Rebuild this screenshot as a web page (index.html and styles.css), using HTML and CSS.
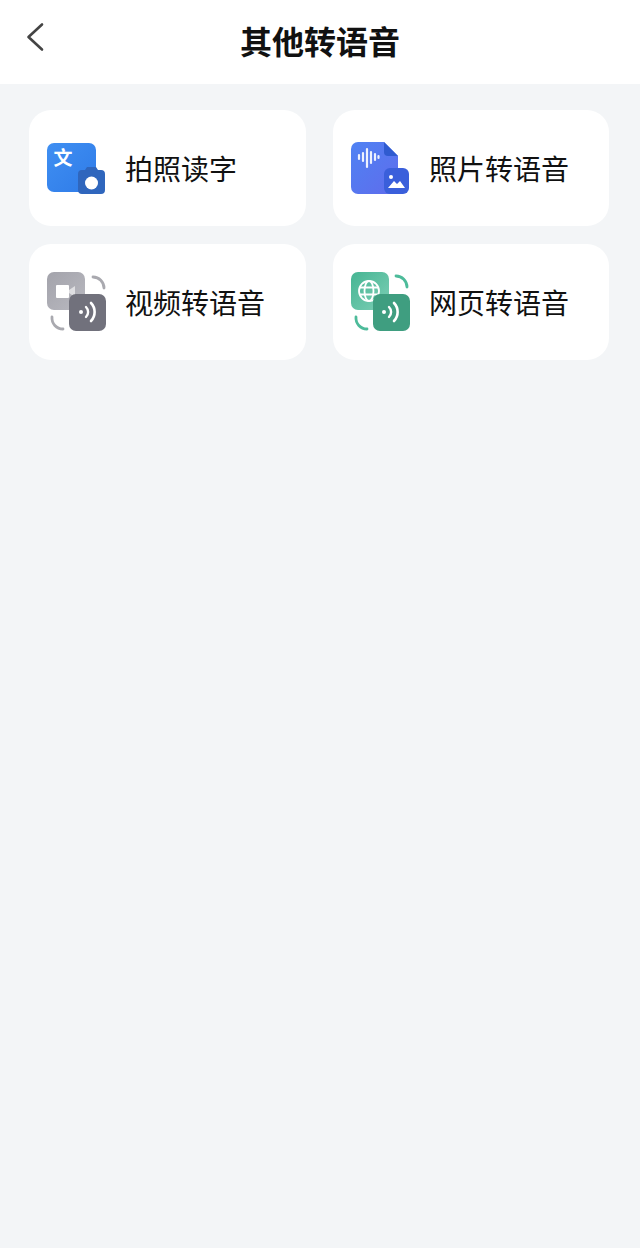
FILE: index.html
```html
<!DOCTYPE html>
<html lang="zh-CN">
<head>
    <meta charset="UTF-8">
    <meta name="viewport" content="width=device-width, initial-scale=1.0">
    <title>其他转语音</title>
    <link rel="stylesheet" href="styles.css">
</head>
<body>
    <header class="top-bar">
        <a class="back" href="#" aria-label="返回">
            <svg width="20" height="32" viewBox="0 0 20 32" fill="none">
                <path d="M16 2.5 2.5 15 16 27.500" stroke="#444" stroke-width="2.6" stroke-linecap="round" stroke-linejoin="round"/>
            </svg>
        </a>
        <h1 class="page-title">其他转语音</h1>
    </header>

    <main class="tool-grid">
        <div class="tool-card">
            <svg class="tool-icon" width="60" height="60" viewBox="0 0 60 60">
                <defs>
                    <linearGradient id="blueTile" x1="0" y1="0" x2="1" y2="1">
                        <stop offset="0" stop-color="#3f8ff2"/>
                        <stop offset="1" stop-color="#2f7be8"/>
                    </linearGradient>
                </defs>
                <rect x="1" y="5" width="49" height="49" rx="7" fill="url(#blueTile)"/>
                <text class="icon-glyph" x="17" y="27" text-anchor="middle">文</text>
                <path d="M36 32h3l2-3h9l2 3h3a4 4 0 0 1 4 4v16a4 4 0 0 1-4 4H36a4 4 0 0 1-4-4V36a4 4 0 0 1 4-4z" fill="#2f66bd"/>
                <circle cx="45.500" cy="45" r="6.500" fill="#fff"/>
            </svg>
            <span class="tool-name">拍照读字</span>
        </div>

        <div class="tool-card">
            <svg class="tool-icon" width="60" height="60" viewBox="0 0 60 60">
                <defs>
                    <linearGradient id="docTile" x1="0" y1="0" x2="1" y2="1">
                        <stop offset="0" stop-color="#4f82f3"/>
                        <stop offset="1" stop-color="#5f6cec"/>
                    </linearGradient>
                </defs>
                <path d="M8 4h26l14 14v31a7 7 0 0 1-7 7H8a7 7 0 0 1-7-7V11a7 7 0 0 1 7-7z" fill="url(#docTile)"/>
                <path d="M34 4l14 14H38a4 4 0 0 1-4-4z" fill="#2f5bd0"/>
                <g stroke="#fff" stroke-linecap="round" stroke-opacity=".9">
                    <path d="M9 17v4" stroke-width="2.200"/>
                    <path d="M13 15v8" stroke-width="2.200"/>
                    <path d="M17 11v18" stroke-width="2.200"/>
                    <path d="M21 14v11" stroke-width="2.200"/>
                    <path d="M25 16v6" stroke-width="2.200"/>
                    <path d="M28.500 18v2" stroke-width="2.200"/>
                </g>
                <rect x="34" y="30" width="25" height="26" rx="6" fill="#3a5fdb"/>
                <circle cx="41" cy="39" r="2" fill="#fff"/>
                <path d="M38 50l6-7 3 3 3-3 5 7z" fill="#fff"/>
            </svg>
            <span class="tool-name">照片转语音</span>
        </div>

        <div class="tool-card">
            <svg class="tool-icon" width="60" height="60" viewBox="0 0 60 60">
                <defs>
                    <linearGradient id="greyTile" x1="0" y1="0" x2="1" y2="1">
                        <stop offset="0" stop-color="#a3a3ab"/>
                        <stop offset="1" stop-color="#b9b9c0"/>
                    </linearGradient>
                </defs>
                <rect x="1" y="0" width="38" height="38" rx="7" fill="url(#greyTile)"/>
                <rect x="10" y="13" width="13" height="13" rx="1" fill="#fff"/>
                <path d="M23 18l6-4v11l-6-4z" fill="#fff" fill-opacity=".6"/>
                <g fill="none" stroke="#a9a9af" stroke-width="2.800" stroke-linecap="round">
                    <path d="M47 5a11 11 0 0 1 11 11"/>
                    <path d="M17 57a11 11 0 0 1-11-12"/>
                </g>
                <rect x="23" y="22" width="37" height="37" rx="7" fill="#71717c"/>
                <circle cx="35" cy="40" r="2" fill="#fff"/>
                <g fill="none" stroke="#fff" stroke-linecap="round">
                    <path d="M40 35a7 7 0 0 1 0 10" stroke-width="2.400"/>
                    <path d="M45 31a13 13 0 0 1 0 18" stroke-width="2.600"/>
                </g>
            </svg>
            <span class="tool-name">视频转语音</span>
        </div>

        <div class="tool-card">
            <svg class="tool-icon" width="60" height="60" viewBox="0 0 60 60">
                <defs>
                    <linearGradient id="greenTile" x1="0" y1="0" x2="1" y2="1">
                        <stop offset="0" stop-color="#45b593"/>
                        <stop offset="1" stop-color="#7fcfb6"/>
                    </linearGradient>
                </defs>
                <rect x="1" y="0" width="38" height="38" rx="7" fill="url(#greenTile)"/>
                <g fill="none" stroke="#fff" stroke-width="1.800">
                    <circle cx="19" cy="19" r="10"/>
                    <ellipse cx="19" cy="19" rx="4.500" ry="10"/>
                    <path d="M10 15.500h18M10 22.500h18"/>
                </g>
                <g fill="none" stroke="#4dbb9a" stroke-width="2.800" stroke-linecap="round">
                    <path d="M46 4a11 11 0 0 1 11 11"/>
                    <path d="M17 57a11 11 0 0 1-11-12"/>
                </g>
                <rect x="23" y="22" width="37" height="37" rx="7" fill="#3f9e80"/>
                <circle cx="34" cy="40" r="2" fill="#fff"/>
                <g fill="none" stroke="#fff" stroke-linecap="round">
                    <path d="M39 35a7 7 0 0 1 0 10" stroke-width="2.400"/>
                    <path d="M44 31a13 13 0 0 1 0 18" stroke-width="2.600"/>
                </g>
            </svg>
            <span class="tool-name">网页转语音</span>
        </div>
    </main>
</body>
</html>
```

FILE: styles.css
```css
body {
    margin: 0;
    min-height: 1248px;
    background-color: #f3f5f7;
    color: #111;
    font-family: "Noto Sans CJK SC", "Noto Sans", sans-serif;
}

.top-bar {
    display: grid;
    grid-template-columns: 1fr auto 1fr;
    align-items: center;
    height: 84px;
    padding-left: 26px;
    padding-right: 26px;
    background-color: #fff;
}

.back {
    display: flex;
    align-items: center;
    height: 32px;
    margin-top: -8px;
}

.page-title {
    margin: 0;
    margin-top: -4px;
    font-size: 32px;
    font-weight: 700;
    line-height: 44px;
}

.tool-grid {
    display: grid;
    grid-template-columns: 277px 276px;
    grid-auto-rows: 116px;
    column-gap: 27px;
    row-gap: 18px;
    padding: 26px 31px 0 29px;
}

.tool-card {
    display: flex;
    align-items: center;
    gap: 19px;
    padding-left: 17px;
    background-color: #fff;
    border-radius: 22px;
}

.tool-icon {
    flex-shrink: 0;
}

.icon-glyph {
    fill: #fff;
    font-size: 19px;
    font-weight: 700;
}

.tool-name {
    font-size: 28px;
    line-height: 40px;
}
```
